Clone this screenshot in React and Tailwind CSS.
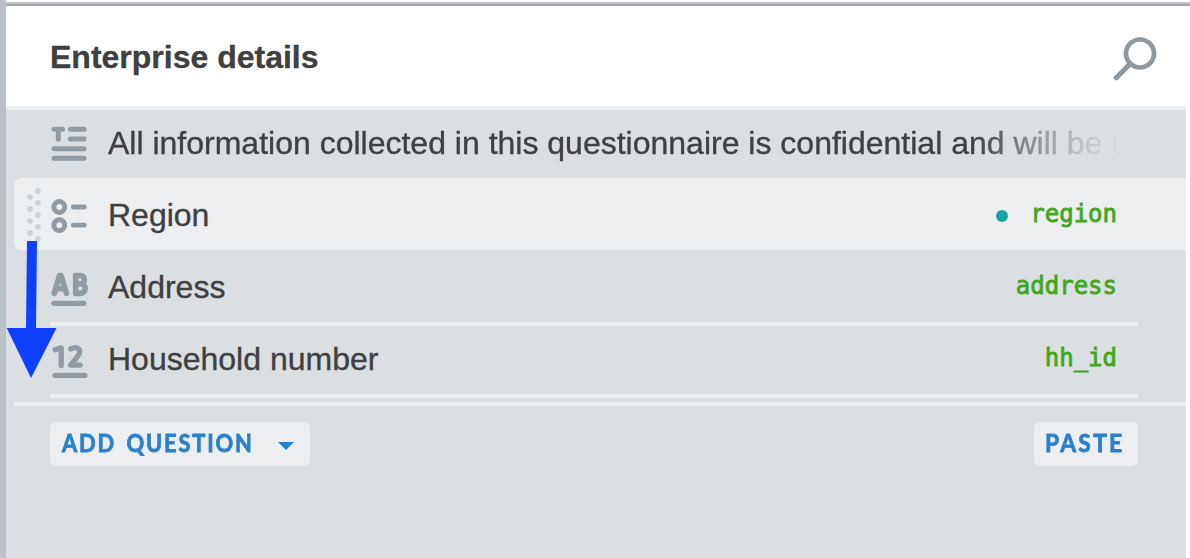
import React from "react";

const ICON = "#919ba3";

function TextIcon() {
  return (
    <svg width="38" height="38" viewBox="0 0 38 38" fill="none" stroke={ICON} strokeWidth="5" strokeLinecap="round" className="block">
      <path d="M4 4.2H12.5M8.3 4.5V14.2" />
      <path d="M20.3 4.2H34M20.3 14H34M4 23.7H34M4 33.3H34" />
    </svg>
  );
}

function OptionsIcon() {
  return (
    <svg width="38" height="38" viewBox="0 0 38 38" fill="none" stroke={ICON} className="block">
      <circle cx="9.3" cy="10" r="5.4" strokeWidth="5" />
      <circle cx="9.3" cy="28.2" r="5.4" strokeWidth="5" />
      <path d="M23.3 10H34.3M23.3 28.2H34.3" strokeWidth="4.8" strokeLinecap="round" />
    </svg>
  );
}

function LettersIcon() {
  return (
    <svg width="40" height="38" viewBox="0 0 40 38" fill="none" stroke={ICON} strokeWidth="5.6" strokeLinecap="round" strokeLinejoin="round" className="block">
      <path d="M4.3 23.3L9.5 5.6H11L16.4 23.3M6.5 18.8H14" />
      <path d="M25.7 5.5H30.5C35.6 5.5 35.6 13.8 30.5 13.8H25.7M30.5 13.8C36.8 13.8 36.8 23.4 30.5 23.4H25.7V5.5" />
      <path d="M3.8 33.3H33.8" strokeWidth="5.2" />
    </svg>
  );
}

function NumbersIcon() {
  return (
    <svg width="40" height="38" viewBox="0 0 40 38" fill="none" stroke={ICON} strokeWidth="5.4" strokeLinecap="round" strokeLinejoin="round" className="block">
      <path d="M5.2 6.8L11.2 4.9V22.6" />
      <path d="M20.8 5.9C26 3.2 30.5 5.2 29.5 9.8C28.8 13.2 24 17.7 20.7 22.1H30.2" />
      <path d="M5 32.4H35" strokeWidth="5.2" />
    </svg>
  );
}

function SearchIcon() {
  return (
    <svg width="44" height="44" viewBox="0 0 44 44" fill="none" stroke="#8d989f" strokeLinecap="round" className="block">
      <circle cx="27" cy="16.5" r="14" strokeWidth="4.7" />
      <path d="M16.5 27.5L3.3 40.8" strokeWidth="5" />
    </svg>
  );
}

function DragHandle() {
  return (
    <svg width="16" height="56" viewBox="0 0 16 56" fill="#c6d2da" className="block">
      {[3, 15, 27, 39, 51].map((y) => (
        <circle key={y} cx="12" cy={y} r="2.8" />
      ))}
      {[9, 21, 33, 45].map((y) => (
        <circle key={y} cx="4" cy={y} r="2.8" />
      ))}
    </svg>
  );
}

function Code({ children }) {
  return (
    <span className="font-['DejaVu_Sans_Mono',monospace] text-[24px] leading-[30px] text-[#3fa81c] [-webkit-text-stroke:0.8px_#3fa81c]">
      {children}
    </span>
  );
}

export default function App() {
  return (
    <div className="relative flex h-[558px] w-[1190px] overflow-hidden bg-white font-['Liberation_Sans',Arial,sans-serif] text-[#404041] [-webkit-text-stroke:0.35px_#404041]">
      <div className="w-[6px] shrink-0 bg-[#bac1c9]" />
      <div className="flex min-w-0 grow flex-col">
        <div className="mt-[2px] h-[4px] shrink-0 border-b-2 border-[#a0a3a8] bg-[#bfc2c6]" />
        <header className="flex h-[100px] shrink-0 items-start justify-between pl-[44px] pr-[33px] pt-[31px]">
          <h1 className="pt-[2px] text-[32px] font-bold leading-[36px]">Enterprise details</h1>
          <SearchIcon />
        </header>
        <main className="mr-[4px] flex grow flex-col border-t-4 border-[#edeef0] bg-[#dbdfe2]">
          <div className="flex h-[68px] shrink-0 pl-[44px]">
            <div className="w-[58px] shrink-0 pt-[15px]"><TextIcon /></div>
            <div className="w-[1020px] overflow-hidden whitespace-nowrap pt-[15px] text-[32px] leading-[36px] [mask-image:linear-gradient(to_right,black_866px,rgba(0,0,0,0.5)_925px,rgba(0,0,0,0.2)_970px,transparent_1014px)]">
              All information collected in this questionnaire is confidential and will be used
            </div>
          </div>
          <div className="ml-[8px] flex h-[72px] shrink-0 rounded-l-[8px] bg-[#edeef0] pl-[12px] pr-[69px]">
            <div className="w-[24px] shrink-0 pt-[10px]"><DragHandle /></div>
            <div className="w-[58px] shrink-0 pt-[19px]"><OptionsIcon /></div>
            <div className="grow pt-[19px] text-[32px] leading-[36px]">Region</div>
            <div className="flex items-start pt-[21px]">
              <div className="mr-[22px] mt-[11px] size-[12px] rounded-full bg-[#18a5a5]" />
              <Code>region</Code>
            </div>
          </div>
          <div className="ml-[44px] mr-[48px] flex h-[76px] shrink-0 border-b-4 border-[#edeef0] pr-[21px]">
            <div className="w-[58px] shrink-0 pt-[20px]"><LettersIcon /></div>
            <div className="grow pt-[19px] text-[32px] leading-[36px]">Address</div>
            <div className="pt-[21px]"><Code>address</Code></div>
          </div>
          <div className="ml-[44px] mr-[48px] flex h-[72px] shrink-0 border-b-4 border-[#edeef0] pr-[21px]">
            <div className="w-[58px] shrink-0 pt-[17px]"><NumbersIcon /></div>
            <div className="grow pt-[15px] text-[32px] leading-[36px]">Household number</div>
            <div className="pt-[17px]"><Code>hh_id</Code></div>
          </div>
          <div className="ml-[8px] mt-[4px] h-[4px] shrink-0 bg-[#edeef0]" />
          <div className="ml-[44px] mr-[48px] mt-[16px] flex justify-between font-['Lato',sans-serif] text-[24px] font-bold leading-[42px] text-[#2a81cb] [-webkit-text-stroke:0.8px_#2a81cb]">
            <button className="flex h-[44px] w-[260px] items-start rounded-[6px] bg-[#edeef0] pl-[12px]">
              <span className="w-[216px] origin-left scale-x-[0.91] whitespace-nowrap text-left tracking-[2px] [word-spacing:4px]">ADD QUESTION</span>
              <svg width="16" height="8" viewBox="0 0 16 8" className="mt-[20px]" fill="#2a81cb">
                <path d="M0 0H16L8 8Z" />
              </svg>
            </button>
            <button className="flex h-[44px] w-[104px] items-start whitespace-nowrap rounded-[6px] bg-[#edeef0] pl-[11px] text-left">
              <span className="origin-left scale-x-[0.95] tracking-[2.4px]">PASTE</span>
            </button>
          </div>
        </main>
      </div>
      <svg className="absolute left-[6px] top-[241px]" width="52" height="138" viewBox="0 0 52 138" fill="#0f40ff">
        <path d="M21 0H31L30 87H50.5L25 137L.7 87H20Z" />
      </svg>
    </div>
  );
}
